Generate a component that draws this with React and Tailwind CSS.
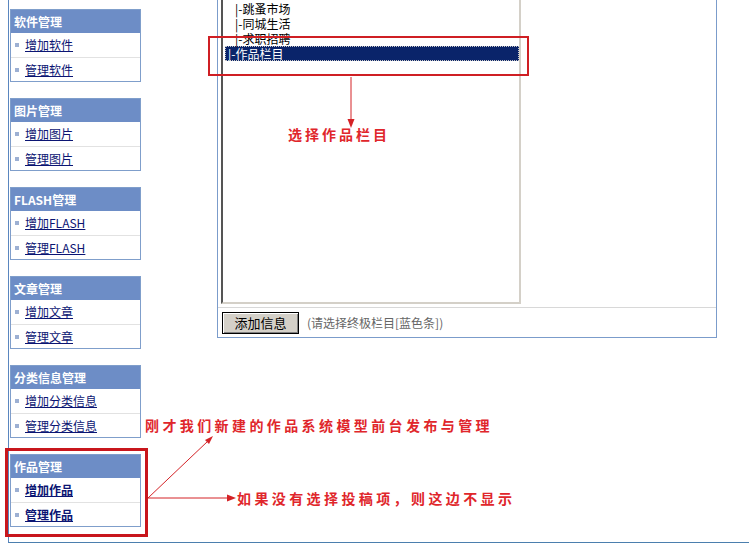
import React from "react";

const groups = [
  { title: "软件管理", items: ["增加软件", "管理软件"] },
  { title: "图片管理", items: ["增加图片", "管理图片"] },
  { title: "FLASH管理", items: ["增加FLASH", "管理FLASH"] },
  { title: "文章管理", items: ["增加文章", "管理文章"] },
  { title: "分类信息管理", items: ["增加分类信息", "管理分类信息"] },
  { title: "作品管理", items: ["增加作品", "管理作品"], bold: true },
];

const cats = ["|-跳蚤市场", "|-同城生活", "|-求职招聘"];

const cjk = { fontFamily: '"Noto Sans CJK SC", "Liberation Sans", sans-serif' };

function MenuBox({ title, items, bold }) {
  return (
    <div className="w-[131px] border border-[#7f9ecb] bg-white">
      <div className="h-[23px] bg-[#6d8dc6] pl-[3px] text-[12px] leading-[23px] font-bold text-white">
        {title}
      </div>
      {items.map((it, i) => (
        <div
          key={it}
          className={
            "flex h-[24px] items-center gap-[6px] pl-[4px] " +
            (i > 0 ? "border-t border-[#e2e2e2]" : "")
          }
        >
          <span className="h-[4px] w-[4px] bg-[#9db0d3]"></span>
          <a
            className={
              "text-[12px] leading-[14px] text-[#0b1573] underline " + (bold ? "font-bold" : "")
            }
          >
            {it}
          </a>
        </div>
      ))}
    </div>
  );
}

export default function App() {
  return (
    <div className="relative h-[556px] w-[749px] overflow-hidden bg-white" style={cjk}>
      <div className="ml-[8px] flex h-[543px] border-b border-l border-b-[#4b7fae] border-l-[#5a86bf]">
        <div className="ml-[1px] flex flex-col gap-[16px] pt-[9px]">
          {groups.map((g) => (
            <MenuBox key={g.title} {...g} />
          ))}
        </div>

        <div className="ml-[76px] flex h-[338px] w-[500px] flex-col border-b border-l border-r border-[#7b9ccb]">
          <div className="h-[307px] pl-[3px]">
            <div className="h-[304px] w-[300px] border-b-2 border-l-2 border-r-2 border-b-[#d4d0c8] border-l-[#555] border-r-[#d4d0c8] bg-white pl-[2px] pt-[1px]">
              {cats.map((c) => (
                <div key={c} className="h-[15px] pl-[10px] text-[12px] leading-[15px] text-black">
                  {c}
                </div>
              ))}
              <div className="h-[15px] w-[294px] border border-dotted border-[#c8c8c8] bg-[#0a246a] pl-[2px] text-[12px] leading-[13px] text-white">
                |-作品栏目
              </div>
            </div>
          </div>
          <div className="flex h-[30px] items-center gap-[8px] border-t border-[#d8d8d8] pl-[4px]">
            <button className="h-[22px] w-[77px] border border-black bg-[#d4d0c8] text-[13px] leading-[20px] text-black shadow-[inset_1px_1px_0_#fff,inset_-1px_-1px_0_#808080]">
              添加信息
            </button>
            <span className="text-[12px] text-[#666]">(请选择终极栏目[蓝色条])</span>
          </div>
        </div>
      </div>

      {/* annotations */}
      <div className="pointer-events-none absolute left-[208px] top-[36px] h-[40px] w-[321px] border-2 border-[#cf1f24]"></div>
      <div className="pointer-events-none absolute left-[5px] top-[448px] h-[89px] w-[143px] border-[3px] border-[#c8161c]"></div>

      <svg className="pointer-events-none absolute left-0 top-0" width="749" height="556">
        <line x1="351" y1="77" x2="351" y2="120" stroke="#d42226" strokeWidth="1" />
        <polygon points="347.5,119 354.5,119 351,128" fill="#d42226" />
        <line x1="148" y1="498" x2="208" y2="441" stroke="#d42226" strokeWidth="1" />
        <polygon points="213,436 205,440 209,444" fill="#d42226" />
        <line x1="148" y1="498" x2="228" y2="498" stroke="#d42226" strokeWidth="1" />
        <polygon points="227,494.5 227,501.5 236,498" fill="#d42226" />
      </svg>

      <div className="absolute left-[288px] top-[125px] text-[14px] leading-[18px] font-bold tracking-[3px] text-[#e0262b]">
        选择作品栏目
      </div>
      <div className="absolute left-[145px] top-[416px] text-[14px] leading-[18px] font-bold tracking-[3.4px] text-[#e0262b]">
        刚才我们新建的作品系统模型前台发布与管理
      </div>
      <div className="absolute left-[237px] top-[489px] text-[14px] leading-[18px] font-bold tracking-[3.4px] text-[#e0262b]">
        如果没有选择投稿项，则这边不显示
      </div>
    </div>
  );
}
